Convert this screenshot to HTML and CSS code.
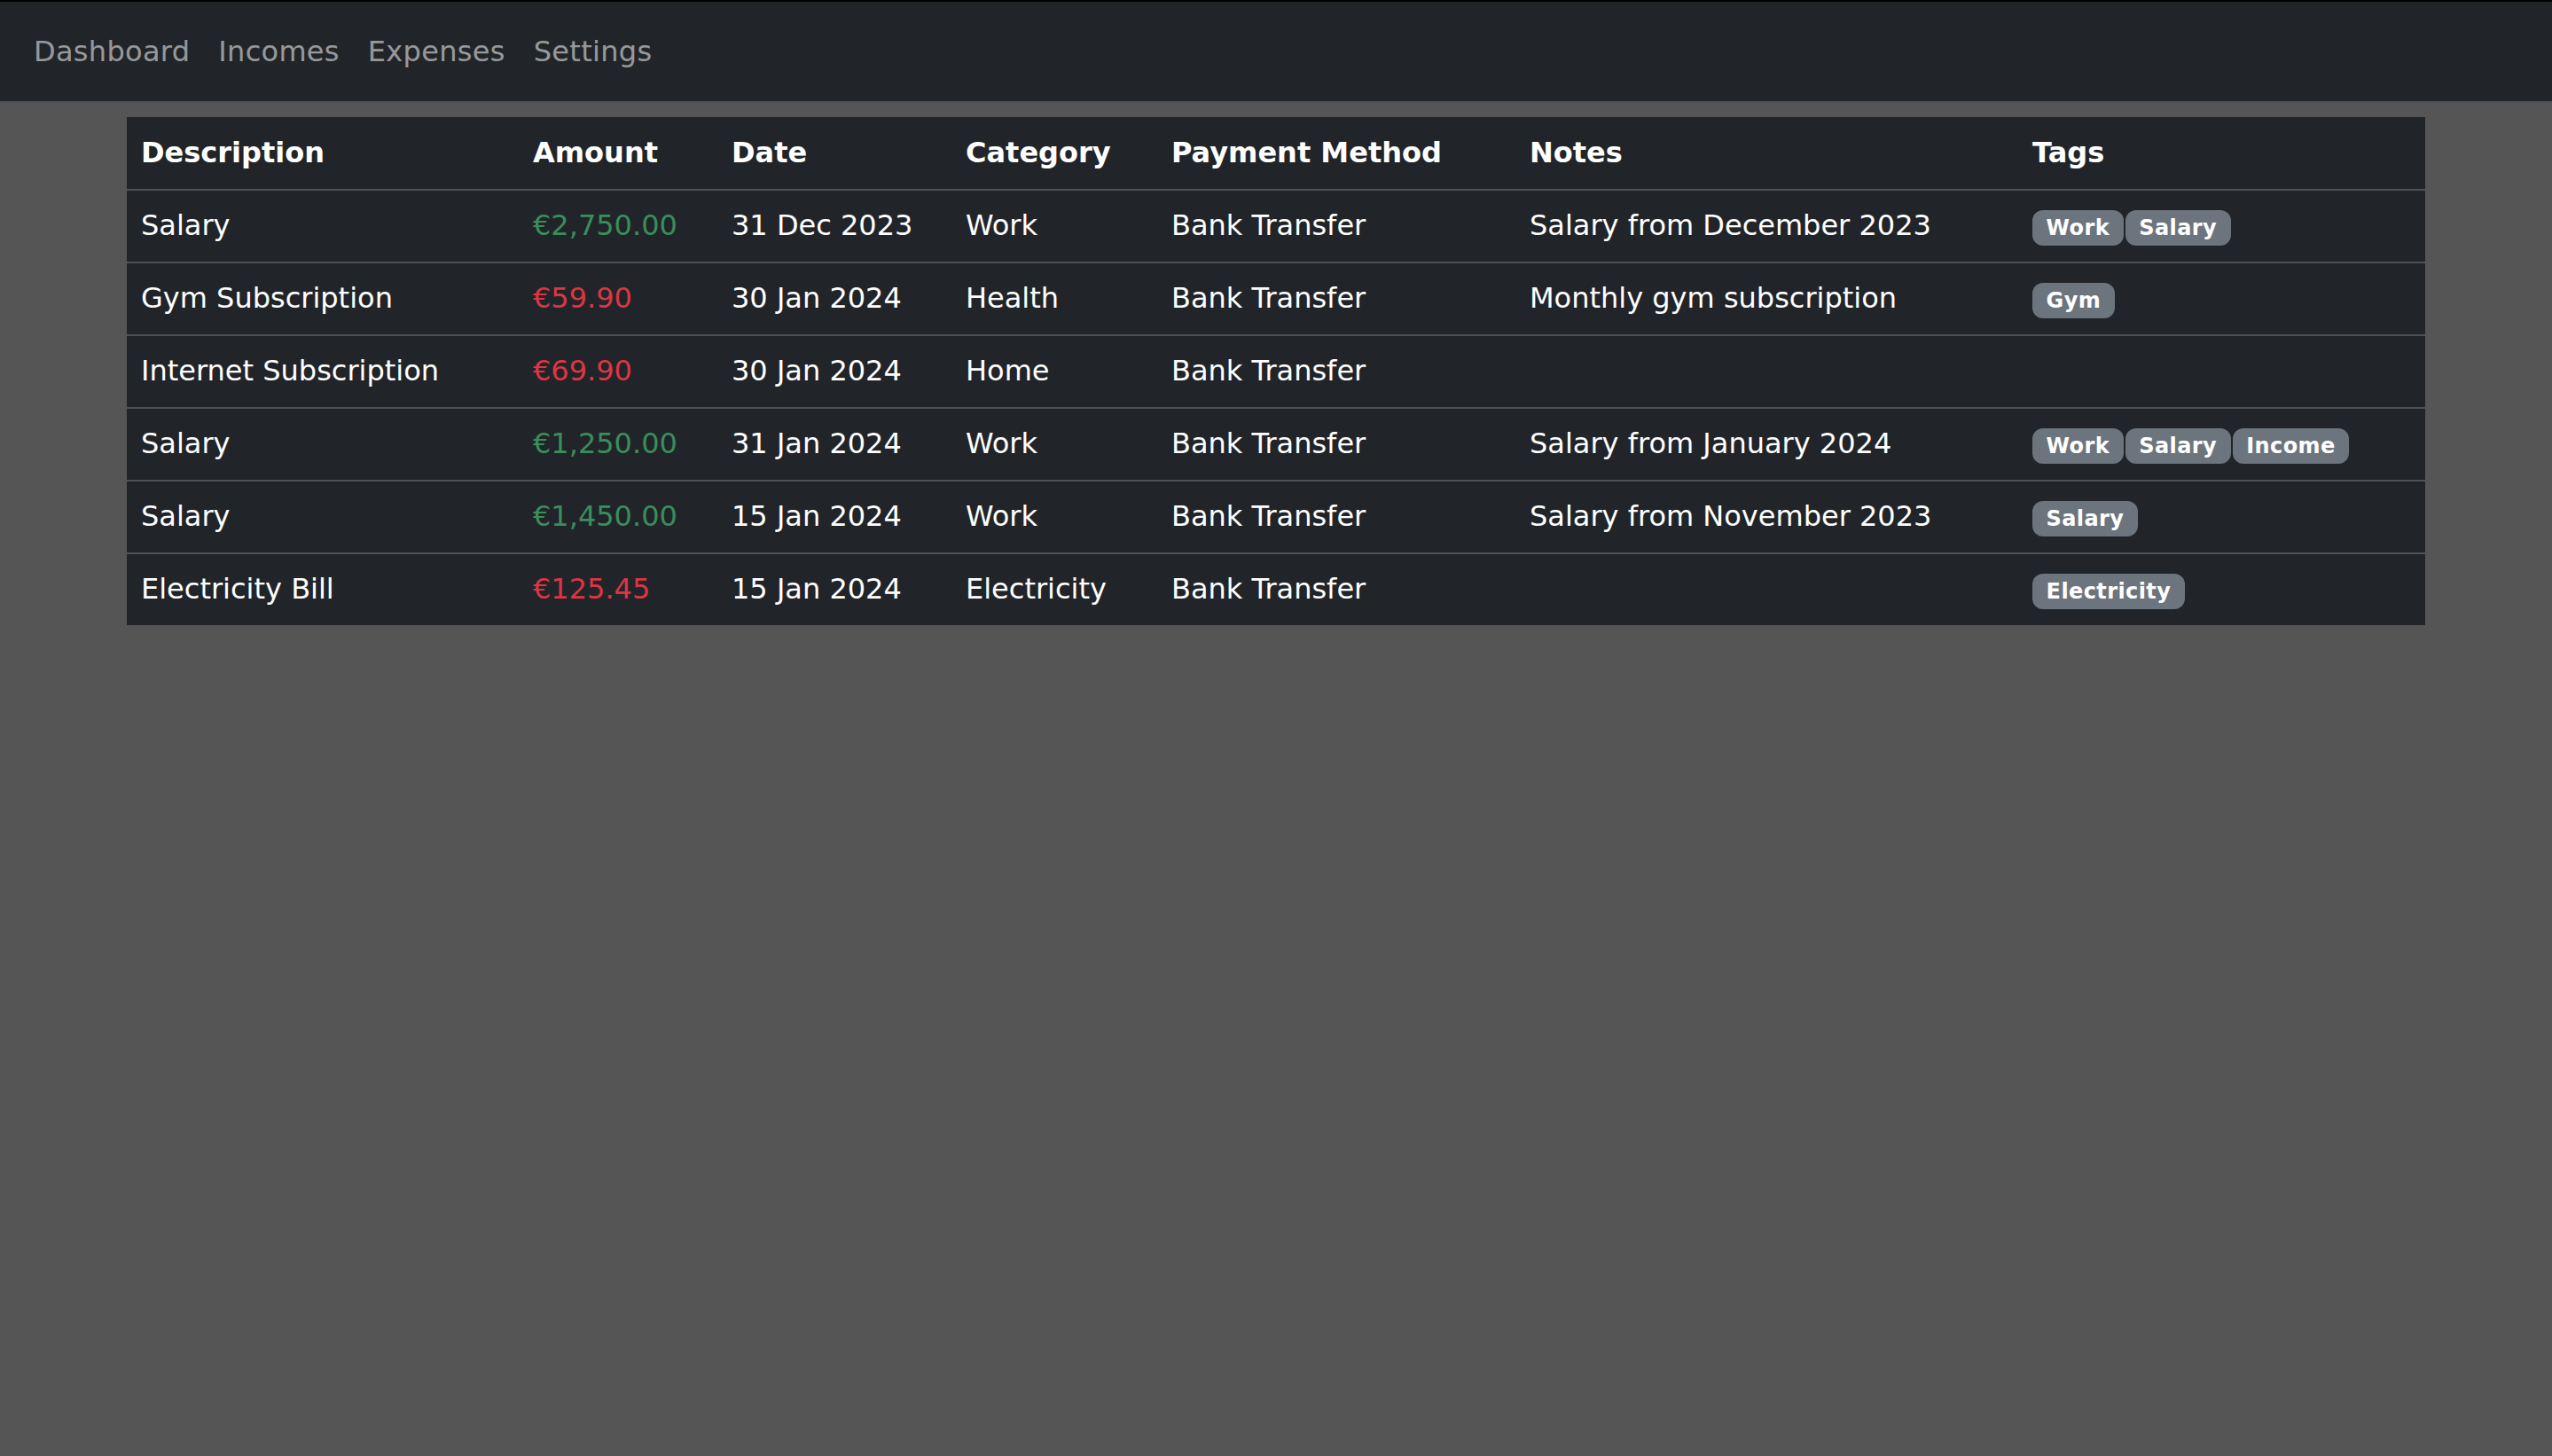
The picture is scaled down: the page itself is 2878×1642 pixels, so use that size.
FILE: index.html
```html
<!DOCTYPE html>
<html lang="en">
<head>
<meta charset="utf-8">
<title>Transactions</title>
<link rel="stylesheet" href="styles.css">
</head>
<body>
<nav class="navbar">
  <ul class="nav-list">
    <li><a class="nav-link" href="#">Dashboard</a></li>
    <li><a class="nav-link" href="#">Incomes</a></li>
    <li><a class="nav-link" href="#">Expenses</a></li>
    <li><a class="nav-link" href="#">Settings</a></li>
  </ul>
</nav>
<main class="container">
  <table class="tx-table">
    <colgroup>
      <col class="c-desc"><col class="c-amount"><col class="c-date"><col class="c-cat"><col class="c-pay"><col class="c-notes"><col class="c-tags">
    </colgroup>
    <thead>
      <tr><th>Description</th><th>Amount</th><th>Date</th><th>Category</th><th>Payment Method</th><th>Notes</th><th>Tags</th></tr>
    </thead>
    <tbody>
      <tr><td>Salary</td><td class="income">€2,750.00</td><td>31 Dec 2023</td><td>Work</td><td>Bank Transfer</td><td>Salary from December 2023</td><td><span class="badge">Work</span><span class="badge">Salary</span></td></tr>
      <tr><td>Gym Subscription</td><td class="expense">€59.90</td><td>30 Jan 2024</td><td>Health</td><td>Bank Transfer</td><td>Monthly gym subscription</td><td><span class="badge">Gym</span></td></tr>
      <tr><td>Internet Subscription</td><td class="expense">€69.90</td><td>30 Jan 2024</td><td>Home</td><td>Bank Transfer</td><td></td><td></td></tr>
      <tr><td>Salary</td><td class="income">€1,250.00</td><td>31 Jan 2024</td><td>Work</td><td>Bank Transfer</td><td>Salary from January 2024</td><td><span class="badge">Work</span><span class="badge">Salary</span><span class="badge">Income</span></td></tr>
      <tr><td>Salary</td><td class="income">€1,450.00</td><td>15 Jan 2024</td><td>Work</td><td>Bank Transfer</td><td>Salary from November 2023</td><td><span class="badge">Salary</span></td></tr>
      <tr><td>Electricity Bill</td><td class="expense">€125.45</td><td>15 Jan 2024</td><td>Electricity</td><td>Bank Transfer</td><td></td><td><span class="badge">Electricity</span></td></tr>
    </tbody>
  </table>
</main>
</body>
</html>
```

FILE: styles.css
```css
* { box-sizing: border-box; }

html, body {
  margin: 0;
  padding: 0;
}

body {
  background: #555555;
  font-family: "DejaVu Sans", "Liberation Sans", sans-serif;
  font-size: 32px;
  line-height: 48px;
  color: #ffffff;
  border-top: 2px solid #000000;
  min-height: 100vh;
}

.navbar {
  background: #212529;
  padding: 16px 22px;
  border-bottom: 2px solid #4b4f54;
}

.nav-list {
  list-style: none;
  margin: 0;
  padding: 0;
  display: flex;
}

.nav-link {
  display: block;
  padding: 16px 16px;
  color: rgba(255, 255, 255, 0.55);
  text-decoration: none;
  letter-spacing: 0.3px;
}

.container {
  width: 2640px;
  margin: 16px auto 0;
  padding: 0 24px;
}

.tx-table {
  width: 100%;
  table-layout: fixed;
  border-collapse: collapse;
  background: #212529;
}

.c-desc { width: 442px; }
.c-amount { width: 224px; }
.c-date { width: 264px; }
.c-cat { width: 232px; }
.c-pay { width: 404px; }
.c-notes { width: 567px; }
.c-tags { width: 459px; }

.tx-table th,
.tx-table td {
  padding: 16px;
  text-align: left;
  vertical-align: top;
  white-space: nowrap;
  border-bottom: 2px solid #4d5154;
  height: 82px;
}

.tx-table td {
  padding-top: 15px;
  padding-bottom: 17px;
}

.tx-table th {
  font-weight: 700;
}

.tx-table tbody tr:last-child td {
  border-bottom: 0;
  height: 80px;
}

.income { color: #3a8d5c; }
.expense { color: #dc3545; }

.badge {
  display: inline-block;
  font-size: 24px;
  font-weight: 700;
  line-height: 1;
  padding: 8.4px 15.6px;
  margin-right: 2px;
  border-radius: 12px;
  background: #6c757d;
  color: #ffffff;
  vertical-align: baseline;
  letter-spacing: 0.4px;
}
```
